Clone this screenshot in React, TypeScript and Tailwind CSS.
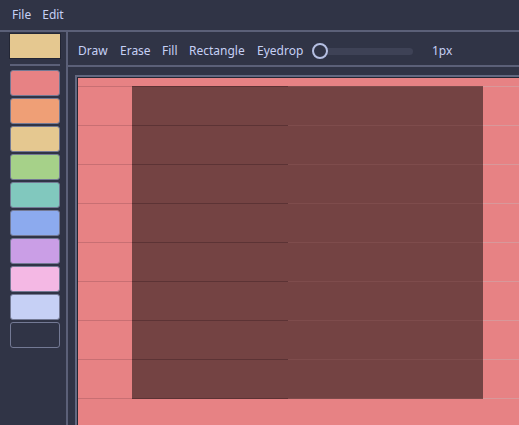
const palette = [
  "#e78284",
  "#ef9f76",
  "#e5c890",
  "#a6d189",
  "#81c8be",
  "#8caaee",
  "#ca9ee6",
  "#f4b8e4",
  "#c6d0f5",
];

const tools = [
  { name: "Draw", w: "w-[42px]" },
  { name: "Erase", w: "w-[42px]" },
  { name: "Fill", w: "w-[27px]" },
  { name: "Rectangle", w: "w-[68px]" },
  { name: "Eyedrop", w: "w-[55px]" },
];

const rows = [8, 47, 86, 125, 164, 203, 242, 281, 320];

const PixelCanvas = () => {
  return (
    <svg width="460" height="360" className="block">
      <rect x="0" y="0" width="460" height="360" fill="#e78284" />
      <rect x="54" y="8" width="351" height="312" fill="#744343" />
      {rows.map((y) => (
        <g key={y}>
          <line x1="0" x2="54" y1={y + 0.5} y2={y + 0.5} stroke="#c86f73" />
          <line x1="54" x2="210" y1={y + 0.5} y2={y + 0.5} stroke="#5c3335" />
          <line x1="210" x2="405" y1={y + 0.5} y2={y + 0.5} stroke="#7e4c4c" />
          <line x1="405" x2="460" y1={y + 0.5} y2={y + 0.5} stroke="#d8989a" />
        </g>
      ))}
    </svg>
  );
};

export default function App() {
  return (
    <div className="w-[519px] h-[425px] overflow-hidden bg-[#303446] text-[#c6d0f5] text-[12px] font-['Noto_Sans',sans-serif] flex flex-col">
      <div className="h-[32px] shrink-0 flex items-center gap-[11px] pl-[12px] border-b-2 border-[#5b6078]">
        <span>File</span>
        <span>Edit</span>
      </div>

      <div className="flex flex-1 min-h-0">
        <aside className="w-[68px] shrink-0 border-r-2 border-[#5b6078] flex flex-col items-start pl-[9px] pt-[1px]">
          <div className="w-[52px] h-[26px] border border-[#232634] bg-[#e5c890]" />
          <div className="w-[50px] h-[2px] bg-[#5b6078] ml-[1px] mt-[5px] mb-[4px]" />
          <div className="flex flex-col gap-[2px] ml-[1px]">
            {palette.map((c) => (
              <div
                key={c}
                className="w-[50px] h-[26px] rounded-[3px] border border-[#737994]"
                style={{ backgroundColor: c }}
              />
            ))}
            <div className="w-[50px] h-[26px] rounded-[3px] border border-[#737994]" />
          </div>
        </aside>

        <main className="flex-1 min-w-0 flex flex-col">
          <div className="h-[35px] shrink-0 flex items-center pl-[10px] pt-[4px] border-b-2 border-[#5b6078]">
            {tools.map((t) => (
              <span key={t.name} className={`${t.w} shrink-0`}>
                {t.name}
              </span>
            ))}
            <div className="relative w-[101px] h-[16px] shrink-0">
              <div className="absolute left-[11px] right-0 top-[5px] h-[7px] rounded-full bg-[#3e4256]" />
              <div className="absolute left-0 top-0 w-[16px] h-[16px] rounded-full border-2 border-[#b5bfe2] bg-[#303446]" />
            </div>
            <span className="ml-[19px]">1px</span>
          </div>

          <div className="flex-1 min-h-0 pl-[7px] pt-[8px]">
            <div className="w-[460px] h-[370px] border-2 border-[#626880]">
              <div className="border border-[#232634]">
                <PixelCanvas />
              </div>
            </div>
          </div>
        </main>
      </div>
    </div>
  );
}
